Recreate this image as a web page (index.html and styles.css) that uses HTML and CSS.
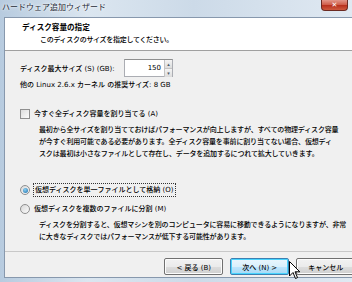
FILE: index.html
```html
<!DOCTYPE html>
<html lang="ja">
<head>
  <meta charset="UTF-8">
  <title>ハードウェア追加ウィザード</title>
  <link rel="stylesheet" href="styles.css">
</head>
<body>
  <div class="window">
    <!-- Title bar -->
    <div class="titlebar">
      <span class="title">ハードウェア追加ウィザード</span>
      <span class="close">✕</span>
    </div>

    <div class="frame">
      <div class="client">
        <!-- Header -->
        <div class="header">
          <div class="header-title">ディスク容量の指定</div>
          <div class="header-sub">このディスクのサイズを指定してください。</div>
        </div>

        <!-- Body -->
        <div class="content">
          <div class="size-row">
            <span class="size-label">ディスク最大サイズ (S) (GB):</span>
            <div class="spin">
              <span class="spin-value">150</span>
              <div class="spin-buttons">
                <span class="spin-btn">▴</span>
                <span class="spin-btn">▾</span>
              </div>
            </div>
          </div>
          <div class="line">他の Linux 2.6.x カーネル の推奨サイズ: 8 GB</div>

          <div class="option check-row">
            <span class="checkbox"></span>
            <span>今すぐ全ディスク容量を割り当てる (A)</span>
          </div>
          <div class="desc">最初から全サイズを割り当てておけばパフォーマンスが向上しますが、すべての物理ディスク容量<br>が今すぐ利用可能である必要があります。全ディスク容量を事前に割り当てない場合、仮想ディ<br>スクは最初は小さなファイルとして存在し、データを追加するにつれて拡大していきます。</div>

          <div class="option radio-first">
            <span class="radio checked"></span>
            <span class="focus">仮想ディスクを単一ファイルとして格納 (O)</span>
          </div>
          <div class="option radio-second">
            <span class="radio"></span>
            <span>仮想ディスクを複数のファイルに分割 (M)</span>
          </div>
          <div class="desc">ディスクを分割すると、仮想マシンを別のコンピュータに容易に移動できるようになりますが、非常<br>に大きなディスクではパフォーマンスが低下する可能性があります。</div>
        </div>

        <!-- Buttons -->
        <div class="footer">
          <button class="btn">&lt; 戻る (B)</button>
          <button class="btn default">次へ (N) &gt;</button>
          <button class="btn">キャンセル</button>
        </div>
      </div>
    </div>

    <svg class="cursor" width="12" height="19" viewBox="0 0 12 19">
      <path d="M0.5 0.5 L0.5 15 L4 11.5 L6.5 17.5 L8.5 16.6 L6 10.8 L10.8 10.8 Z" fill="#fff" stroke="#000" stroke-width="1"/>
    </svg>
  </div>
</body>
</html>
```

FILE: styles.css
```css
* {
  box-sizing: border-box;
  margin: 0;
  padding: 0;
}

body {
  width: 352px;
  height: 282px;
  overflow: hidden;
  font-family: "DejaVu Sans", "Noto Sans CJK JP", sans-serif;
  font-size: 7px;
  font-weight: 500;
  color: #000;
  background: #c9d8e6;
}

.window {
  position: relative;
  height: 282px;
  display: flex;
  flex-direction: column;
  background: linear-gradient(90deg, #b7cbdf 0%, #dbe6f0 25%, #ccdae8 55%, #e0e9f2 100%);
}

.titlebar {
  height: 17px;
  display: flex;
  justify-content: space-between;
  align-items: flex-start;
  padding-left: 2px;
  padding-right: 4px;
}

.title {
  font-size: 8px;
  font-weight: 400;
  line-height: 16px;
  color: #1e2a36;
  text-shadow: 0 0 4px #ffffff, 0 0 2px #ffffff;
}

.close {
  width: 27px;
  height: 11px;
  border: 1px solid #6b2a22;
  border-top: none;
  border-radius: 0 0 4px 4px;
  background: linear-gradient(#e3978a 0%, #d0604d 45%, #b8321f 55%, #cf5a3f 100%);
  color: #fff;
  font-size: 7px;
  font-weight: bold;
  line-height: 10px;
  text-align: center;
}

.frame {
  flex: 1;
  padding: 0 4px 4px 4px;
  display: flex;
}

.client {
  flex: 1;
  display: flex;
  flex-direction: column;
  background: #f0f0f0;
  border: 1px solid #8798ad;
}

.header {
  height: 33px;
  background: #fff;
  border-bottom: 1px solid #a0a0a0;
  padding: 4px 0 0 17px;
}

.header-title {
  font-size: 7.6px;
  font-weight: bold;
  line-height: 12px;
}

.header-sub {
  line-height: 13px;
  padding-left: 18px;
  letter-spacing: -0.3px;
}

.content {
  flex: 1;
  padding: 8px 12px 0 15px;
  white-space: nowrap;
}

.size-row {
  display: flex;
  align-items: center;
  height: 18px;
}

.size-label {
  width: 104px;
}

.spin {
  width: 49px;
  height: 18px;
  display: flex;
  background: #fff;
  border: 1px solid #abadb3;
  border-top-color: #8e8f8f;
}

.spin-value {
  flex: 1;
  text-align: right;
  line-height: 16px;
  padding-right: 3px;
}

.spin-buttons {
  width: 8px;
  display: flex;
  flex-direction: column;
}

.spin-btn {
  flex: 1;
  font-size: 5px;
  line-height: 8px;
  text-align: center;
  color: #4d5a68;
  background: linear-gradient(#f4f4f4, #dcdcdc);
  border-left: 1px solid #c4c4c4;
}

.spin-btn + .spin-btn {
  border-top: 1px solid #c4c4c4;
}

.line {
  line-height: 12px;
  margin-top: 2px;
}

.option {
  display: flex;
  align-items: center;
  gap: 4px;
  line-height: 12px;
}

.check-row {
  margin-top: 17px;
}

.radio-first {
  margin-top: 24px;
}

.radio-second {
  margin-top: 7px;
}

.checkbox {
  width: 10px;
  height: 10px;
  border: 1px solid #8f8f8f;
  background: linear-gradient(135deg, #dcdcdc, #fbfbfb);
}

.radio {
  width: 10px;
  height: 10px;
  border-radius: 50%;
  border: 1px solid #8f8f8f;
  background: linear-gradient(135deg, #d8d8d8, #fbfbfb);
  display: flex;
  align-items: center;
  justify-content: center;
}

.radio.checked::after {
  content: "";
  width: 5px;
  height: 5px;
  border-radius: 50%;
  background: radial-gradient(circle at 40% 35%, #8ad0f4, #1f6ea8);
}

.focus {
  outline: 1px dotted #333;
  padding: 0 1px;
}

.desc {
  line-height: 12px;
  padding-left: 19px;
  margin-top: 4px;
  letter-spacing: -0.15px;
}

.footer {
  height: 26px;
  border-top: 1px solid #c8c8c8;
  display: flex;
  justify-content: flex-end;
  gap: 7px;
  padding: 6px 3px 0 0;
}

.btn {
  width: 59px;
  height: 17px;
  font-family: inherit;
  font-size: 7px;
  font-weight: 500;
  color: #000;
  border: 1px solid #707070;
  border-radius: 2px;
  background: linear-gradient(#f2f2f2 0%, #ebebeb 50%, #dddddd 51%, #cfcfcf 100%);
  box-shadow: inset 0 0 0 1px #fcfcfc;
}

.btn.default {
  border-color: #3c7fb1;
  background: linear-gradient(#eaf6fd 0%, #d9f0fc 50%, #bee6fd 51%, #a7d9f5 100%);
  box-shadow: inset 0 0 0 1px #48d4fe;
}

.cursor {
  position: absolute;
  left: 289px;
  top: 261px;
}
```
